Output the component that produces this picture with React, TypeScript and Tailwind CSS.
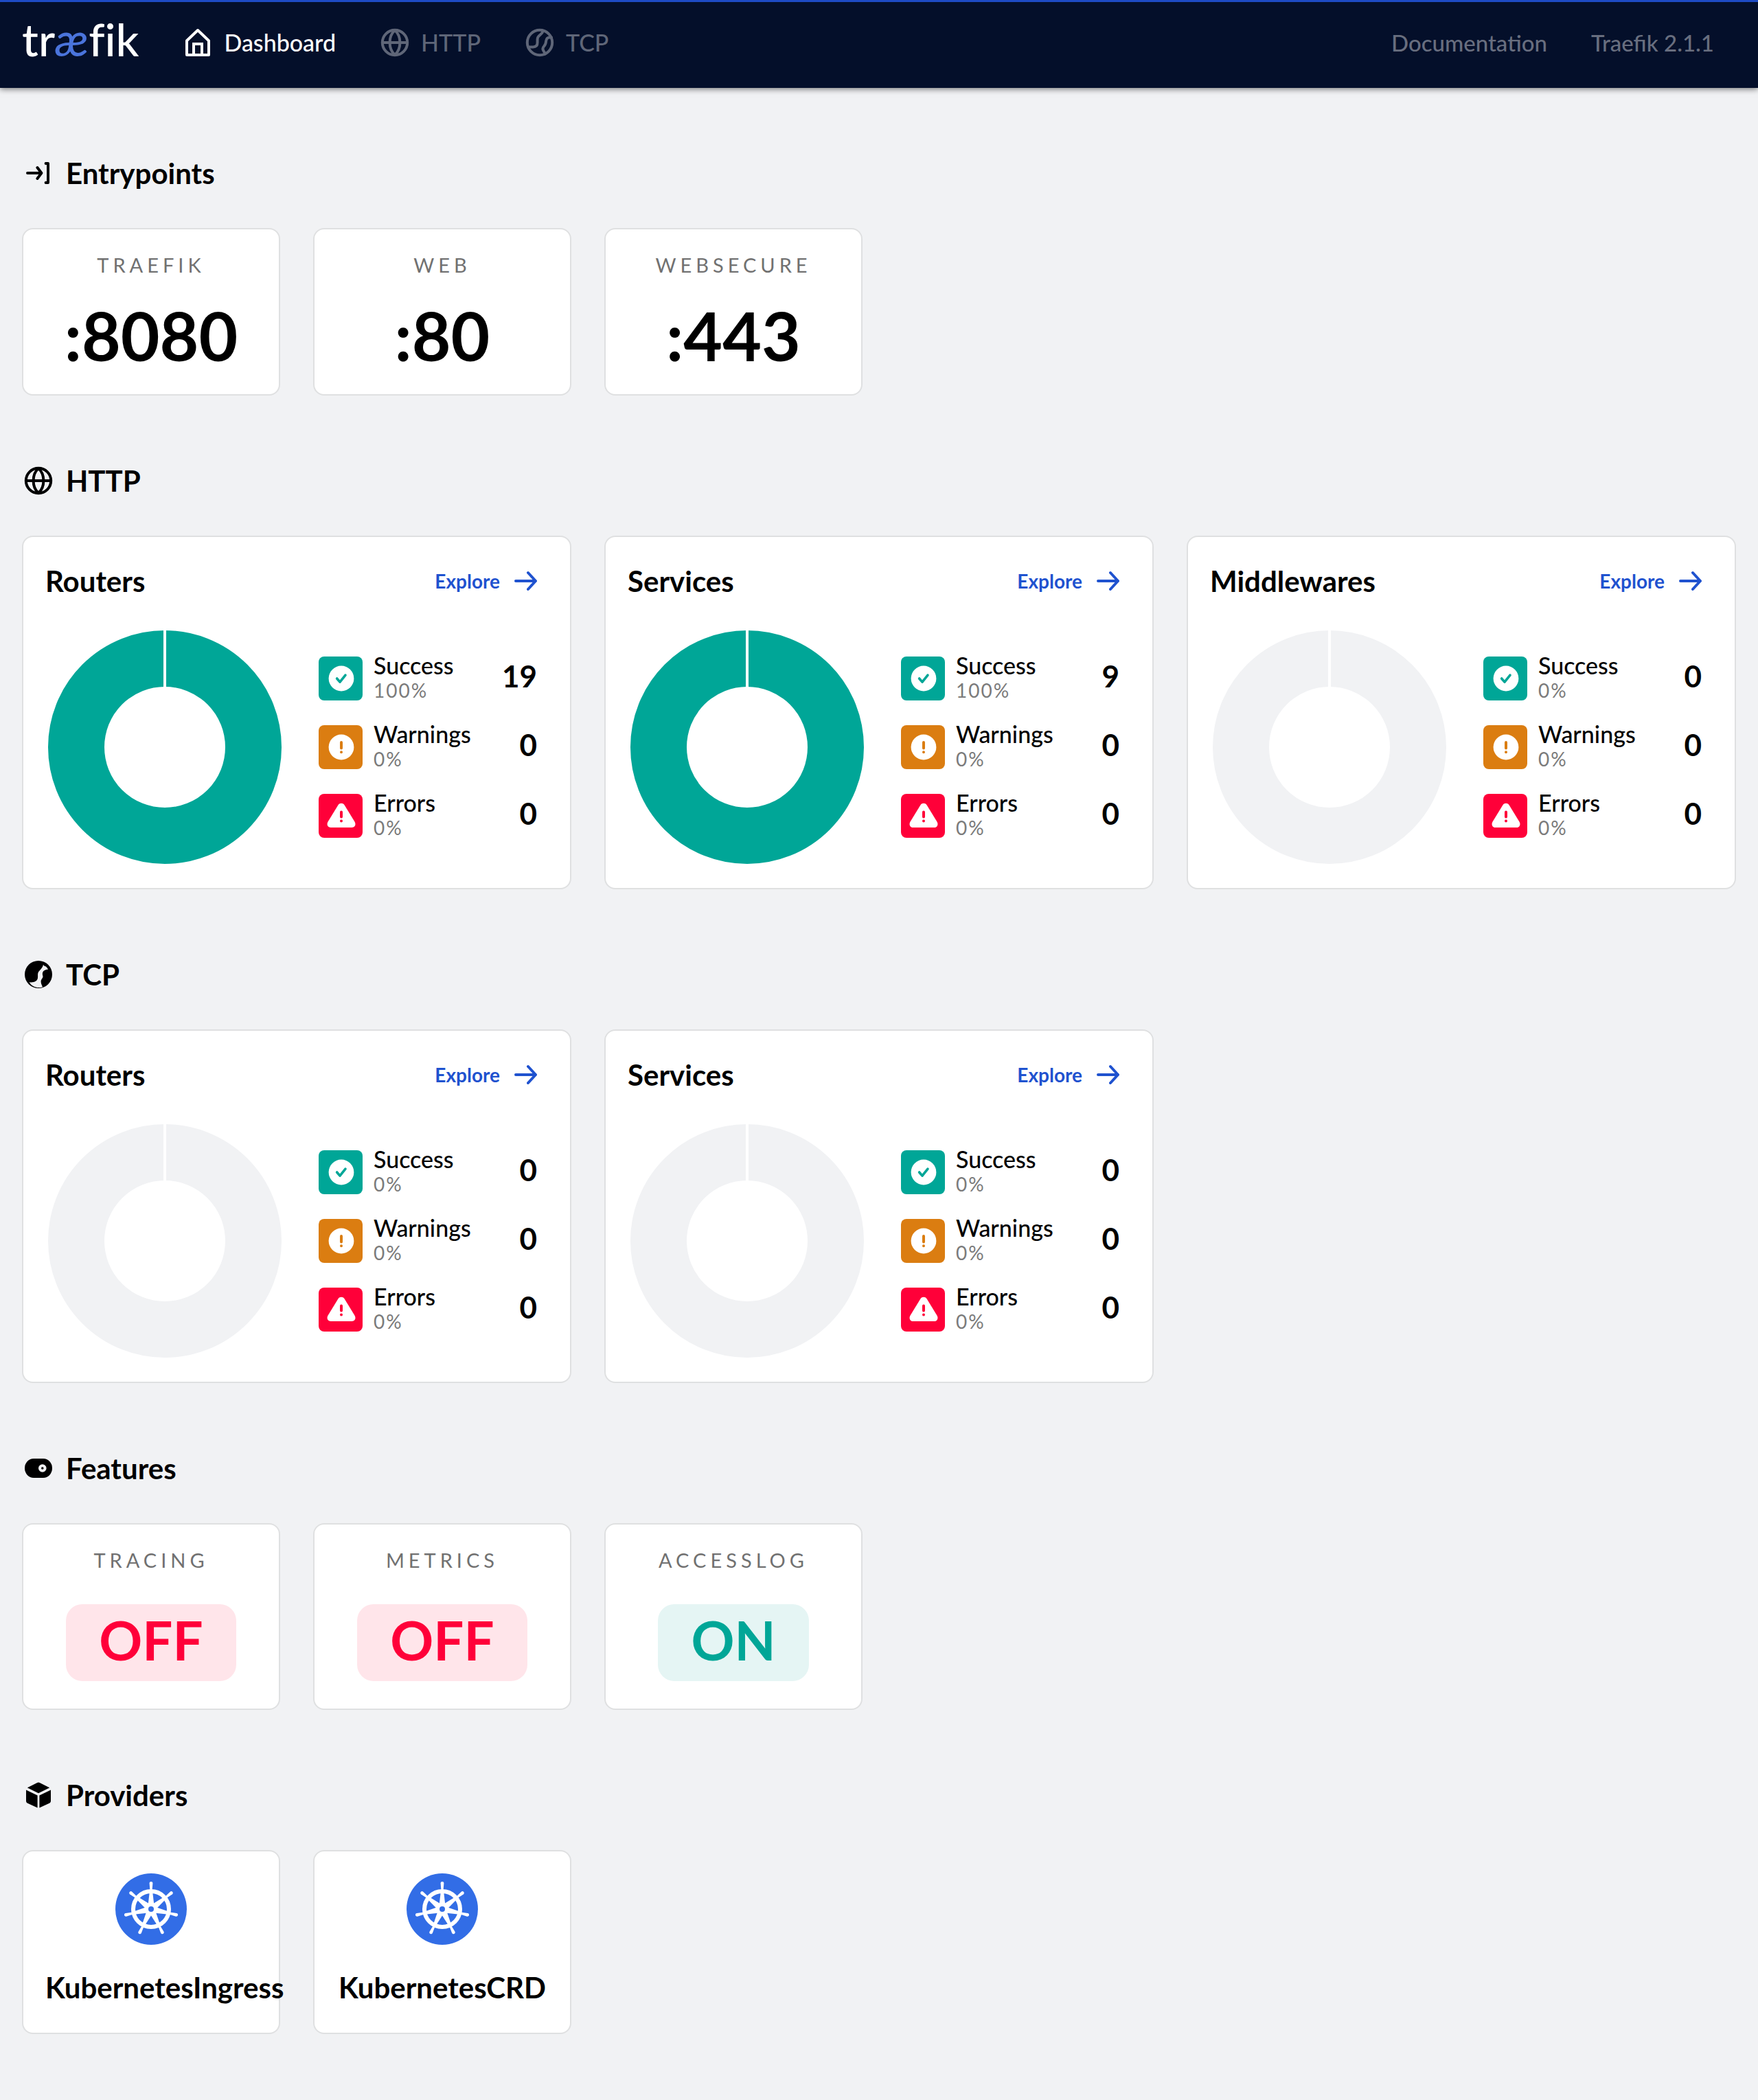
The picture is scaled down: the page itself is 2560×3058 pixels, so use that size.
import type { ReactNode } from "react";

type IconProps = { className?: string };

function Icon({ className = "size-12", children }: { className?: string; children: ReactNode }) {
  return (
    <svg
      viewBox="0 0 24 24"
      className={`shrink-0 ${className}`}
      fill="none"
      stroke="currentColor"
      strokeWidth="2"
      strokeLinecap="round"
      strokeLinejoin="round"
      aria-hidden="true"
    >
      {children}
    </svg>
  );
}

const HomeIcon = (p: IconProps) => (
  <Icon {...p}>
    <path d="M4 10.6 12 3l8 7.6V21H4Z" />
    <path d="M9 21v-8h6v8" strokeLinejoin="miter" />
  </Icon>
);

const GlobeIcon = (p: IconProps) => (
  <Icon {...p}>
    <circle cx="12" cy="12" r="9.1" />
    <path d="M3 12h18M12 3C9.400 5.300 8.300 8.600 8.300 12s1.100 6.700 3.700 9c2.600-2.300 3.700-5.600 3.700-9S14.600 5.300 12 3Z" />
  </Icon>
);

const EarthIcon = (p: IconProps) => (
  <Icon {...p}>
    <circle cx="12" cy="12" r="9.1" />
    <path d="M3.800 15.200h3.400c2 0 3.100-1.200 3.100-3.200V9.800c0-1.600.7-2.600 1.900-3.400 1.100-.8 1.900-1.600 2.300-3" />
    <path d="M20.500 8.200h-1.300c-1.600 0-2.400 1-2.600 2.600-.2 2-.5 2.900-1.500 3.900-1.200 1.200-1 2.600-.1 3.800.5.6.8 1.200.9 1.800" />
  </Icon>
);

const EarthSolidIcon = (p: IconProps) => (
  <Icon {...p}>
    <path
      fill="currentColor"
      stroke="none"
      fillRule="evenodd"
      d="M12 2a10 10 0 1 0 0 20 10 10 0 0 0 0-20Zm3.500 2.800c.3.900 1 1.300 2 1.400.7.700 1.200 1.400 1.500 2.200-2.400 0-4.100 1.200-4.100 3.200 0 1 .5 1.500.3 2.300-.3 1.200-1.400 1.600-1.400 3.300 0 1.600.7 2.300 1.200 3.900-3.700 1.200-7.800-.1-9.700-3.500 3.300.4 5.900-.5 6.200-3.100.2-1.500-.2-2.700.3-3.900.7-1.500 3.100-2.700 3.700-5.800Z"
    />
  </Icon>
);

const EnterIcon = (p: IconProps) => (
  <Icon {...p}>
    <path d="M4 12h9.500M11.200 8l3 4-3 4" />
    <path d="M17.300 5H19v14h-1.700" />
  </Icon>
);

const ToggleIcon = (p: IconProps) => (
  <Icon {...p}>
    <path
      fill="currentColor"
      stroke="none"
      fillRule="evenodd"
      d="M8.500 5h7a6.500 7 0 0 1 0 14h-7a6.500 7 0 0 1 0-14Zm6.400 4.100a2.900 2.900 0 1 0 0 5.800 2.900 2.900 0 0 0 0-5.800Zm0 2a.9.900 0 1 1 0 1.800.9.900 0 0 1 0-1.800Z"
    />
  </Icon>
);

const CubeIcon = (p: IconProps) => (
  <Icon {...p}>
    <path
      fill="currentColor"
      stroke="none"
      d="M12 2.800c.3 0 .6.100.9.200l7.200 3.600-8.100 4-8.100-4L11.100 3c.300-.1.600-.2.900-.2ZM3 8.200l8.300 4.100v9L4 17.900c-.6-.3-1-.9-1-1.600ZM21 8.200l-8.300 4.100v9l7.300-3.400c.6-.3 1-.9 1-1.600Z"
    />
  </Icon>
);

const SuccessIcon = () => (
  <Icon>
    <circle cx="12.500" cy="12" r="9.200" fill="white" stroke="none" />
    <path d="m9.300 12 2.200 2.600 4-5" strokeWidth="1.800" />
  </Icon>
);

const WarningIcon = () => (
  <Icon>
    <circle cx="12.500" cy="12" r="9.200" fill="white" stroke="none" />
    <path d="M12.500 8.500v4.200M12.500 15.600v.01" />
  </Icon>
);

const ErrorIcon = () => (
  <Icon>
    <path
      d="M10.300 4c1-1.500 3.400-1.500 4.400 0l7.500 12.200c1.200 2 .3 4.300-2 4.300H4.800c-2.300 0-3.200-2.300-2-4.300Z"
      fill="white"
      stroke="none"
    />
    <path d="M12.500 9.300v3.500M12.500 15.700v.01" />
  </Icon>
);

function ArrowIcon() {
  return (
    <svg viewBox="0 0 34 32" className="h-8 w-[34px] shrink-0" fill="none" stroke="currentColor" strokeWidth="4" strokeLinecap="round" strokeLinejoin="round" aria-hidden="true">
      <path d="M3 16h29M21 4l11 12-11 12" />
    </svg>
  );
}

function KubernetesLogo() {
  return (
    <svg viewBox="0 0 104 104" className="mx-auto size-26" role="img" aria-label="Kubernetes">
      <circle cx="52" cy="52" r="52" fill="#326de6" />
      <circle cx="52" cy="52" r="26" fill="none" stroke="white" strokeWidth="6" />
      {[0, 1, 2, 3, 4, 5, 6].map((n) => (
        <g key={n} transform={`rotate(${(n * 360) / 7} 52 52)`} fill="white">
          <path d="M47.500 47 49.700 28h4.600l2.200 19Z" />
          <path d="M50.500 25 49.600 14.500c-.2-3.300 5-3.300 4.800 0L53.500 25Z" />
        </g>
      ))}
      <circle cx="52" cy="52" r="8" fill="white" />
      <circle cx="52" cy="52" r="4" fill="#326de6" />
    </svg>
  );
}

function NavItem({ icon, label, active = false }: { icon: ReactNode; label: string; active?: boolean }) {
  return (
    <a
      href="#"
      aria-current={active ? "page" : undefined}
      className={`flex items-center gap-3.5 ${active ? "text-white" : "text-[#5f6678]"}`}
    >
      {icon}
      {label}
    </a>
  );
}

function Header() {
  return (
    <header className="flex h-32 items-center border-t-[3px] border-[#1e4bc4] bg-[#040f2a] px-8 pb-2 text-[34px] leading-[48px] font-medium shadow-[0_2px_8px_rgba(0,0,0,0.5)]">
      <a href="#" aria-label="traefik" className="pb-[9px] text-[66px] leading-none font-medium text-white [font-variant-ligatures:none]">
        tr<span className="text-[#4a74dc] italic">æ</span>fik
      </a>
      <nav className="ml-[62px] flex gap-[62px]">
        <NavItem active icon={<HomeIcon />} label="Dashboard" />
        <NavItem icon={<GlobeIcon />} label="HTTP" />
        <NavItem icon={<EarthIcon />} label="TCP" />
      </nav>
      <div className="ml-auto flex gap-16 pr-8 text-[33px] text-[#686e7f]">
        <a href="#">Documentation</a>
        <a href="#">Traefik 2.1.1</a>
      </div>
    </header>
  );
}

function Section({ icon, title, wide = false, children }: { icon: ReactNode; title: string; wide?: boolean; children: ReactNode }) {
  return (
    <section className="pt-24">
      <h2 className="mb-[52px] flex h-14 items-center gap-4 text-[42px] font-bold">
        {icon}
        {title}
      </h2>
      <div className={`grid gap-12 ${wide ? "grid-cols-3" : "grid-cols-6"}`}>{children}</div>
    </section>
  );
}

function Card({ className, children }: { className: string; children: ReactNode }) {
  return <article className={`min-w-0 rounded-2xl border-2 border-[#dfe0e1] bg-white ${className}`}>{children}</article>;
}

function CardLabel({ children }: { children: ReactNode }) {
  return <h3 className="text-[29px] leading-10 tracking-[6px] text-[#717171] uppercase">{children}</h3>;
}

function EntrypointCard({ name, port }: { name: string; port: string }) {
  return (
    <Card className="pt-8 pb-9 text-center">
      <CardLabel>{name}</CardLabel>
      <p className="mt-8 text-[98px] leading-[100px] font-bold">{port}</p>
    </Card>
  );
}

function FeatureCard({ name, on = false }: { name: string; on?: boolean }) {
  return (
    <Card className="pt-8 pb-10 text-center">
      <CardLabel>{name}</CardLabel>
      <p
        className={`mt-11 inline-block rounded-3xl px-12 pb-2 text-[78px] leading-[104px] font-bold ${
          on ? "bg-[#e5f5f4] text-[#00a697]" : "bg-[#ffe5ea] text-[#ff0039]"
        }`}
      >
        {on ? "ON" : "OFF"}
      </p>
    </Card>
  );
}

function ProviderCard({ name }: { name: string }) {
  return (
    <Card className="px-8 pt-8 pb-9 text-center">
      <KubernetesLogo />
      <h3 className="mt-8 text-[42px] leading-[60px] font-bold whitespace-nowrap">{name}</h3>
    </Card>
  );
}

function Stat({ icon, color, label, percent, count }: { icon: ReactNode; color: string; label: string; percent: string; count: number }) {
  return (
    <li className="flex h-16 items-center gap-4">
      <span className={`flex size-16 shrink-0 items-center justify-center rounded-lg ${color}`}>{icon}</span>
      <div className="pb-0.5 leading-[37px]">
        <p className="text-[34px] font-medium">{label}</p>
        <p className="text-[28px] tracking-[2px] text-[#7b7b7b]">{percent}</p>
      </div>
      <strong className="ml-auto pb-2 text-[44px] leading-none">{count}</strong>
    </li>
  );
}

function StatusCard({ title, success = 0 }: { title: string; success?: number }) {
  const filled = success > 0;
  return (
    <Card className="pt-8 pr-12 pb-8 pl-8">
      <div className="flex h-16 items-center justify-between">
        <h3 className="text-[42px] font-bold">{title}</h3>
        <a href="#" className="flex items-center gap-5 text-[28px] font-bold text-[#1f52cf]">
          Explore
          <ArrowIcon />
        </a>
      </div>
      <div className="mt-9 flex items-center gap-[50px]">
        <svg viewBox="0 0 348 347" className="h-[347px] w-[348px] shrink-0" role="img" aria-label={`${title} status chart`}>
          <circle cx="174" cy="174" r="129" fill="none" stroke={filled ? "#00a697" : "#f1f2f4"} strokeWidth="82" />
          <path d="M174 0v88" stroke="white" strokeWidth="4" />
        </svg>
        <ul className="flex grow flex-col gap-9">
          <Stat icon={<SuccessIcon />} color="bg-[#00a697] text-[#00a697]" label="Success" percent={filled ? "100%" : "0%"} count={success} />
          <Stat icon={<WarningIcon />} color="bg-[#db7d11] text-[#db7d11]" label="Warnings" percent="0%" count={0} />
          <Stat icon={<ErrorIcon />} color="bg-[#ff0039] text-[#ff0039]" label="Errors" percent="0%" count={0} />
        </ul>
      </div>
    </Card>
  );
}

export default function App() {
  return (
    <div className="min-h-screen bg-[#f1f2f4] font-['Lato',sans-serif] text-black">
      <Header />
      <main className="px-8 pb-24">
        <Section icon={<EnterIcon />} title="Entrypoints">
          <EntrypointCard name="traefik" port=":8080" />
          <EntrypointCard name="web" port=":80" />
          <EntrypointCard name="websecure" port=":443" />
        </Section>
        <Section icon={<GlobeIcon />} title="HTTP" wide>
          <StatusCard title="Routers" success={19} />
          <StatusCard title="Services" success={9} />
          <StatusCard title="Middlewares" />
        </Section>
        <Section icon={<EarthSolidIcon />} title="TCP" wide>
          <StatusCard title="Routers" />
          <StatusCard title="Services" />
        </Section>
        <Section icon={<ToggleIcon />} title="Features">
          <FeatureCard name="tracing" />
          <FeatureCard name="metrics" />
          <FeatureCard name="accesslog" on />
        </Section>
        <Section icon={<CubeIcon />} title="Providers">
          <ProviderCard name="KubernetesIngress" />
          <ProviderCard name="KubernetesCRD" />
        </Section>
      </main>
    </div>
  );
}
